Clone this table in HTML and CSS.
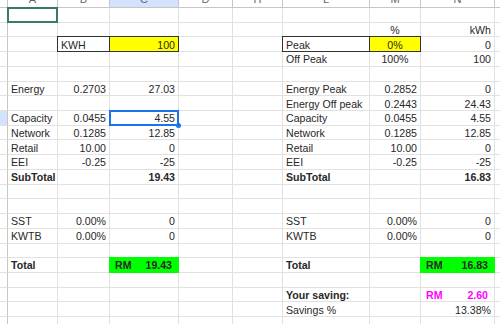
FILE: index.html
```html
<!DOCTYPE html>
<html>
<head>
<meta charset="utf-8">
<link rel="stylesheet" href="styles.css">
</head>
<body>
<div class="sheet">
  <div class="row hdr">
    <div class="rh"></div><div><span>A</span></div><div><span>B</span></div><div class="hsel"><span>C</span></div><div><span>D</span></div><div><span>H</span></div><div><span>L</span></div><div><span>M</span></div><div><span>N</span></div><div></div>
  </div>
  <div class="row">
    <div class="rh"></div><div class="gcur"></div><div></div><div></div><div></div><div></div><div></div><div></div><div></div><div></div>
  </div>
  <div class="row">
    <div class="rh"></div><div></div><div></div><div></div><div></div><div></div><div></div><div class="m">%</div><div class="n">kWh</div><div></div>
  </div>
  <div class="row">
    <div class="rh"></div><div></div><div class="box">KWH</div><div class="n box yel">100</div><div></div><div></div><div class="box">Peak</div><div class="m box yel">0%</div><div class="n">0</div><div></div>
  </div>
  <div class="row">
    <div class="rh"></div><div></div><div></div><div></div><div></div><div></div><div>Off Peak</div><div class="m">100%</div><div class="n">100</div><div></div>
  </div>
  <div class="row">
    <div class="rh"></div><div></div><div></div><div></div><div></div><div></div><div></div><div></div><div></div><div></div>
  </div>
  <div class="row">
    <div class="rh"></div><div>Energy</div><div class="n">0.2703</div><div class="n">27.03</div><div></div><div></div><div>Energy Peak</div><div class="n">0.2852</div><div class="n">0</div><div></div>
  </div>
  <div class="row">
    <div class="rh"></div><div></div><div></div><div></div><div></div><div></div><div>Energy Off peak</div><div class="n">0.2443</div><div class="n">24.43</div><div></div>
  </div>
  <div class="row">
    <div class="rh rsel"></div><div>Capacity</div><div class="n">0.0455</div><div class="n cur">4.55</div><div></div><div></div><div>Capacity</div><div class="n">0.0455</div><div class="n">4.55</div><div></div>
  </div>
  <div class="row">
    <div class="rh"></div><div>Network</div><div class="n">0.1285</div><div class="n">12.85</div><div></div><div></div><div>Network</div><div class="n">0.1285</div><div class="n">12.85</div><div></div>
  </div>
  <div class="row">
    <div class="rh"></div><div>Retail</div><div class="n">10.00</div><div class="n">0</div><div></div><div></div><div>Retail</div><div class="n">10.00</div><div class="n">0</div><div></div>
  </div>
  <div class="row">
    <div class="rh"></div><div>EEI</div><div class="n">-0.25</div><div class="n">-25</div><div></div><div></div><div>EEI</div><div class="n">-0.25</div><div class="n">-25</div><div></div>
  </div>
  <div class="row">
    <div class="rh"></div><div class="b">SubTotal</div><div></div><div class="n b">19.43</div><div></div><div></div><div class="b">SubTotal</div><div></div><div class="n b">16.83</div><div></div>
  </div>
  <div class="row">
    <div class="rh"></div><div></div><div></div><div></div><div></div><div></div><div></div><div></div><div></div><div></div>
  </div>
  <div class="row">
    <div class="rh"></div><div></div><div></div><div></div><div></div><div></div><div></div><div></div><div></div><div></div>
  </div>
  <div class="row">
    <div class="rh"></div><div>SST</div><div class="n">0.00%</div><div class="n">0</div><div></div><div></div><div>SST</div><div class="n">0.00%</div><div class="n">0</div><div></div>
  </div>
  <div class="row">
    <div class="rh"></div><div>KWTB</div><div class="n">0.00%</div><div class="n">0</div><div></div><div></div><div>KWTB</div><div class="n">0.00%</div><div class="n">0</div><div></div>
  </div>
  <div class="row">
    <div class="rh"></div><div></div><div></div><div></div><div></div><div></div><div></div><div></div><div></div><div></div>
  </div>
  <div class="row">
    <div class="rh"></div><div class="b">Total</div><div></div><div class="acc grn"><span>RM</span><span>19.43</span></div><div></div><div></div><div class="b">Total</div><div></div><div class="acc grn"><span>RM</span><span>16.83</span></div><div></div>
  </div>
  <div class="row">
    <div class="rh"></div><div></div><div></div><div></div><div></div><div></div><div></div><div></div><div></div><div></div>
  </div>
  <div class="row">
    <div class="rh"></div><div></div><div></div><div></div><div></div><div></div><div class="b">Your saving:</div><div></div><div class="acc mag"><span>RM</span><span>2.60</span></div><div></div>
  </div>
  <div class="row">
    <div class="rh"></div><div></div><div></div><div></div><div></div><div></div><div>Savings %</div><div></div><div class="n">13.38%</div><div></div>
  </div>
  <div class="row">
    <div class="rh"></div><div></div><div></div><div></div><div></div><div></div><div></div><div></div><div></div><div></div>
  </div>
</div>
</body>
</html>
```
FILE: styles.css
```css
html, body {
  margin: 0;
  padding: 0;
  background: #fff;
  overflow: hidden;
}
body {
  width: 500px;
  height: 324px;
}
.sheet {
  display: grid;
  grid-template-rows: 8px repeat(22, 14.72px);
  font-family: "Liberation Sans", Arial, sans-serif;
  font-size: 10.6px;
  color: #282828;
}
.row {
  display: grid;
  grid-template-columns: 8px 50px 52px 69px 54px 50px 87px 51px 74px 1fr;
}
.row > div {
  box-sizing: border-box;
  border-right: 1px solid #e1e1e1;
  border-bottom: 1px solid #e1e1e1;
  display: flex;
  align-items: flex-end;
  padding: 0 3px 0.5px;
  white-space: nowrap;
  line-height: 12px;
  min-width: 0;
}
.row > .rh {
  border-right-color: #c4c7c5;
  padding: 0;
}
.row > .rsel {
  background: #d3e3fd;
}
.hdr > div {
  border-right-color: #c4c7c5;
  border-bottom-color: #c4c7c5;
  justify-content: center;
  overflow: hidden;
  padding: 0 0 2px;
  font-size: 11px;
  color: #666;
}
.hdr > .hsel {
  background: #d3e3fd;
}
.row > .n {
  justify-content: flex-end;
}
.row > .m {
  justify-content: center;
}
.row > .b {
  font-weight: bold;
}
.row > .yel {
  background: #ffff00;
}
.row > .box {
  border-right-color: #333;
  border-bottom-color: #333;
  box-shadow: -1px 0 0 #333, 0 -1px 0 #333, -1px -1px 0 #333;
}
.row > .acc {
  justify-content: space-between;
  padding: 0 6px 0.5px 5px;
  font-weight: bold;
}
.row > .grn {
  background: #00ff00;
  border-color: #00ff00;
  box-shadow: -1px 0 0 #00ff00, 0 -1px 0 #00ff00, -1px -1px 0 #00ff00;
}
.row > .mag {
  color: #ff00ff;
}
.cur, .gcur {
  position: relative;
}
.cur::after {
  content: "";
  position: absolute;
  left: -1px;
  top: -1px;
  right: -1px;
  bottom: -1px;
  border: 2px solid #1a73e8;
}
.cur::before {
  content: "";
  position: absolute;
  right: -3px;
  bottom: -3px;
  width: 5px;
  height: 5px;
  border-radius: 50%;
  background: #1a73e8;
  z-index: 1;
}
.gcur::after {
  content: "";
  position: absolute;
  left: -1px;
  top: -1px;
  right: -1px;
  bottom: -1px;
  border: 2px solid #3a7868;
}
```
